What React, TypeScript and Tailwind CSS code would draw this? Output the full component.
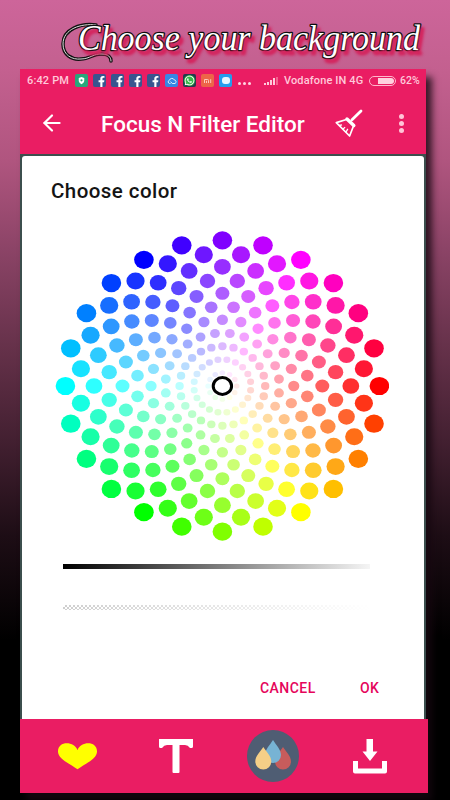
import type { ReactNode } from "react";
import { FaFacebookF, FaWhatsapp } from "react-icons/fa";
import { ArrowLeft } from "lucide-react";

const RINGS = 11;

// The two innermost rings have no room for the full 24 dots.
const dotsInRing = (ring: number) => (ring === 1 ? 12 : ring === 2 ? 20 : 24);

// Saturation grows with the ring, hue follows the angle; even rings are staggered.
const swatches = Array.from({ length: RINGS }, (_, i) => i + 1).flatMap((ring) => {
  const count = dotsInRing(ring);
  const step = 360 / count;
  return Array.from({ length: count }, (_, i) => {
    const hue = i * step + (ring % 2 === 0 ? step / 2 : 0);
    const rad = (hue * Math.PI) / 180;
    const sat = ring / RINGS;
    return {
      id: `${ring}-${i}`,
      cx: Math.cos(rad) * 14.27 * ring,
      cy: Math.sin(rad) * 13.24 * ring,
      r: 9.8 - 0.7 * (RINGS - ring),
      fill: `hsl(${hue} 100% ${100 - sat * 50}%)`,
    };
  });
});

function ColorWheel() {
  return (
    <svg className="block h-[310px] w-[334px]" viewBox="-167.4 -155 334 310">
      {swatches.map((s) => (
        <ellipse key={s.id} cx={s.cx} cy={s.cy} rx={s.r} ry={s.r * 0.93} fill={s.fill} />
      ))}
      <ellipse rx="9.2" ry="8.4" fill="#fff" stroke="#000" strokeWidth="3" />
    </svg>
  );
}

function StatusIcon({ className, children }: { className: string; children: ReactNode }) {
  return (
    <span className={`flex h-[13px] w-[13px] items-center justify-center overflow-hidden rounded-[2px] ${className}`}>
      {children}
    </span>
  );
}

function StatusBar() {
  return (
    <div className="flex h-[23px] items-center pl-[7px] text-[11px] font-medium whitespace-nowrap text-[#ffc9da]">
      <span className="mt-px w-[48px] tracking-[0.15px]">6:42 PM</span>
      <div className="flex gap-[5px]">
        <StatusIcon className="bg-[#27a87b]">
          <svg viewBox="0 0 12 12" className="h-[11px] w-[11px]">
            <path d="M6 2.2 9 3.3V6c0 2-1.3 3.2-3 4-1.7-.8-3-2-3-4V3.3Z" fill="#fff" />
            <circle cx="6" cy="5.8" r="1.2" fill="#27a87b" />
          </svg>
        </StatusIcon>
        {[0, 1, 2, 3].map((n) => (
          <StatusIcon key={n} className="items-end! bg-[#39558f]">
            <FaFacebookF className="ml-[3px] h-[11px] w-[9px] text-white" />
          </StatusIcon>
        ))}
        <StatusIcon className="bg-[#3786e4]">
          <svg viewBox="0 0 12 12" className="h-[12px] w-[12px]" fill="none" stroke="#d9efff" strokeWidth="1">
            <path d="M3.5 8.5a1.7 1.7 0 0 1 0-3.3 2.5 2.5 0 0 1 4.7-.3A1.9 1.9 0 0 1 9 8.5H6.2L4.6 6.6M3.5 8.5h1" />
          </svg>
        </StatusIcon>
        <StatusIcon className="bg-[#233c4e]">
          <span className="flex h-[11px] w-[11px] items-center justify-center rounded-full bg-[#37b64a]">
            <FaWhatsapp className="h-[11px] w-[11px] text-white" />
          </span>
        </StatusIcon>
        <StatusIcon className="bg-[#ed6548]">
          <svg viewBox="0 0 12 12" className="h-[12px] w-[12px]" fill="none" stroke="#ffc9bd" strokeWidth="1">
            <path d="M2.5 8V4.5h3.2q.8 0 .8.8V8M4.5 8V5.8M8.7 4.2V8" />
          </svg>
        </StatusIcon>
        <StatusIcon className="bg-[#239ded]">
          <span className="h-[7px] w-[8px] rounded-[3px] bg-[#e4f6ff]" />
        </StatusIcon>
      </div>
      <div className="mt-[6px] ml-[6px] flex gap-[2px]">
        <i className="h-[3px] w-[3px] rounded-full bg-[#ffd6e2]" />
        <i className="h-[3px] w-[3px] rounded-full bg-[#ffd6e2]" />
        <i className="h-[3px] w-[3px] rounded-full bg-[#ffd6e2]" />
      </div>
      <div className="mt-[1px] ml-[13px] flex h-[8px] items-end gap-px">
        <i className="h-[2px] w-[2px] bg-[#ffc9da]" />
        <i className="h-[3px] w-[2px] bg-[#ffc9da]" />
        <i className="h-[5px] w-[2px] bg-[#ffc9da]" />
        <i className="h-[7px] w-[2px] bg-[#ffc9da]" />
        <i className="h-[8px] w-[2px] bg-[#f3618e]" />
      </div>
      <span className="mt-px ml-[6px] w-[80px] tracking-[0.13px]">Vodafone IN 4G</span>
      <span className="ml-[5px] flex h-[10px] w-[27px] justify-end rounded-[5px] border border-[#ffb6cc] p-px">
        <i className="w-[16px] rounded-r-[3px] bg-[#ffd0de]" />
      </span>
      <span className="mt-px ml-[4px] text-[10.5px]">62%</span>
    </div>
  );
}

function AppBar() {
  return (
    <div className="flex h-[62px] items-center">
      <ArrowLeft className="ml-[19px] h-[26px] w-[26px] text-white" strokeWidth={2} />
      <h1 className="mt-[2px] ml-[36px] w-[205px] text-[22.5px] leading-none font-medium whitespace-nowrap text-white">
        Focus N Filter Editor
      </h1>
      <svg viewBox="0 0 28 29" className="ml-[29px] h-[29px] w-[28px]" fill="none" stroke="#fff">
        <path d="m26 2-9 8.800" strokeWidth="2.8" strokeLinecap="round" />
        <path d="m12 10 6.800 6.500" strokeWidth="3.4" strokeLinecap="round" />
        <path d="M11.500 10.500 1.300 13.600 14.600 27 18.500 17" strokeWidth="1.7" strokeLinejoin="round" />
        <path d="m4 16.500 3-.6m.6 4.300 2.500-2m.7 5.300 2-3.600" strokeWidth="1.3" />
      </svg>
      <div className="ml-[36px] flex flex-col gap-[2px]">
        <i className="h-[5px] w-[5px] rounded-full bg-[#ffc5d7]" />
        <i className="h-[5px] w-[5px] rounded-full bg-[#ffc5d7]" />
        <i className="h-[5px] w-[5px] rounded-full bg-[#ffc5d7]" />
      </div>
    </div>
  );
}

function ColorDialog() {
  return (
    <div className="h-[565px] bg-[#3c4f4e] pt-[2px] pr-[2px] pl-[1.5px]">
      <div className="flex h-full flex-col overflow-hidden rounded-t-[3px] bg-white pl-[0.5px]">
        <h2 className="mt-[22px] ml-[29px] text-[20.5px] leading-[26px] font-medium tracking-[0.45px] whitespace-nowrap text-[#141414]">
          Choose color
        </h2>
        <div className="mt-[27px] ml-[33px]">
          <ColorWheel />
        </div>
        <div className="mt-[23px] ml-[41px] h-[5px] w-[307px] bg-linear-to-r/srgb from-black to-[#f5f5f5]" />
        <div className="mt-[36px] ml-[41px] h-[5px] w-[307px] bg-[repeating-conic-gradient(#cfcfcf_0_25%,#fff_0_50%)] bg-[length:4px_4px]">
          <div className="h-full bg-linear-to-r from-transparent to-white" />
        </div>
        <div className="mt-[68px] flex text-[14px] leading-[20px] font-medium text-[#e5055b]">
          <button className="ml-[238px] w-[58px] text-left tracking-[0.45px]">CANCEL</button>
          <button className="ml-[42px] tracking-[0.4px]">OK</button>
        </div>
      </div>
    </div>
  );
}

function BottomBar() {
  return (
    <div className="ml-px flex h-[74px] w-[407px] items-center bg-[#ea1d63]">
      <svg viewBox="0 0 42 28" className="ml-[36px] h-[28px] w-[41px]">
        <path d="M21 8C24-1 41-2 41 9.500 41 17 29 22 21 27.500 13 22 1 17 1 9.500 1-2 18-1 21 8Z" fill="#ff0" />
      </svg>
      <svg viewBox="0 0 34 34" className="ml-[61px] h-[34px] w-[34px]" fill="#fff">
        <rect x="13.500" y="0" width="7" height="34" rx="1" />
        <path d="M0 0H34V7.500Q34 9 32.500 9H31Q29 6 26 6H8Q5 6 3 9H1.500Q0 9 0 7.500Z" />
      </svg>
      <svg viewBox="0 0 52 52" className="ml-[54px] h-[52px] w-[52px]">
        <circle cx="26" cy="26" r="26" fill="#4f5d73" />
        <path d="M36 17c3 5 8 9 8 14.500a8 8 0 0 1-16 0C28 26 33 22 36 17Z" fill="#c75c5c" />
        <path d="M26 10c3 5 8 9.500 8 15a8 8 0 0 1-16 0c0-5.500 5-10 8-15Z" fill="#77b3d4" />
        <path d="M16.300 17c3 5 8 9 8 14.500a8 8 0 0 1-16 0C8.300 26 13.300 22 16.300 17Z" fill="#f5cf87" />
      </svg>
      <svg viewBox="0 0 34 35" className="ml-[54px] h-[35px] w-[34px]" fill="#fff">
        <path d="M13.500 0h6.500v12.500h4.500L17 22 9.500 12.500h4Z" />
        <path d="M0 22h5v7.500h24V22h5v10.500q0 2-2 2H2q-2 0-2-2Z" />
      </svg>
    </div>
  );
}

const SWASH = "M96 25C81 23 63 29 63 44c0 11 9 16 18 15 9 0 13-6 21-5 6 0 9 3 9 7";

// Title lettering with the long swash that curls round its first capital.
function Title() {
  return (
    <svg viewBox="0 0 450 69" className="block h-[69px] w-[450px]">
      <g fill="none" strokeLinecap="round">
        <path d={SWASH} stroke="#111" strokeWidth="3.500" />
        <path d={SWASH} stroke="#ddd" strokeWidth="1" />
      </g>
      <text
        x="78"
        y="50"
        textLength="342"
        lengthAdjust="spacingAndGlyphs"
        strokeWidth="2.6"
        strokeLinejoin="round"
        className="fill-white stroke-[#0d0d0d] font-['Liberation_Serif',serif] text-[35px] italic [paint-order:stroke_fill] [text-shadow:3px_4px_3px_#d4265f]"
      >
        Choose your background
      </text>
    </svg>
  );
}

export default function App() {
  return (
    <div className="h-[800px] w-[450px] overflow-hidden bg-[linear-gradient(#cd659a_0%,#c3608f_9%,#b0557f_20%,#8c4467_31%,#67324b_43%,#432031_55%,#1d0d15_67%,#000_80%)] font-['Roboto',sans-serif]">
      <Title />
      <main className="ml-[20px] w-[406px] bg-[#ea1d63] shadow-[6px_8px_7px_#160810cc]">
        <StatusBar />
        <AppBar />
        <ColorDialog />
        <BottomBar />
      </main>
    </div>
  );
}
